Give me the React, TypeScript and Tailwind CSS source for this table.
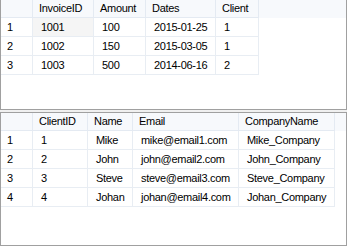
import React from "react";

type Col = { label: string; w: number };

const invoiceCols: Col[] = [
  { label: "", w: 32 },
  { label: "InvoiceID", w: 61 },
  { label: "Amount", w: 52 },
  { label: "Dates", w: 70 },
  { label: "Client", w: 43 },
];

const invoiceRows = [
  ["1", "1001", "100", "2015-01-25", "1"],
  ["2", "1002", "150", "2015-03-05", "1"],
  ["3", "1003", "500", "2014-06-16", "2"],
];

const clientCols: Col[] = [
  { label: "", w: 32 },
  { label: "ClientID", w: 55 },
  { label: "Name", w: 45 },
  { label: "Email", w: 106 },
  { label: "CompanyName", w: 96 },
];

const clientRows = [
  ["1", "1", "Mike", "mike@email1.com", "Mike_Company"],
  ["2", "2", "John", "john@email2.com", "John_Company"],
  ["3", "3", "Steve", "steve@email3.com", "Steve_Company"],
  ["4", "4", "Johan", "johan@email4.com", "Johan_Company"],
];

function ResultGrid({ cols, rows, selected }: { cols: Col[]; rows: string[][]; selected?: boolean }) {
  return (
    <div className="flex flex-col">
      <div className="flex h-[18px] bg-[#f7f9fc]">
        {cols.map((c, i) => (
          <div
            key={i}
            style={{ width: c.w }}
            className="shrink-0 border-r border-b border-[#e4eaf2] pl-[6px] leading-[17px] whitespace-nowrap"
          >
            {c.label}
          </div>
        ))}
      </div>
      {rows.map((r, ri) => (
        <div key={ri} className="flex h-[19px]">
          {r.map((v, ci) => (
            <div
              key={ci}
              style={{ width: cols[ci].w }}
              className={
                "shrink-0 border-r border-b border-[#e8edf3] leading-[18px] whitespace-nowrap " +
                (ci === 0 ? "pl-[6px] " : "pl-[8px] ") +
                (selected && ri === 0 && ci === 1 ? "bg-[#f5f5f5]" : "bg-white")
              }
            >
              {v}
            </div>
          ))}
        </div>
      ))}
    </div>
  );
}

export default function App() {
  return (
    <div
      className="w-[347px] h-[246px] bg-[#f0f0f0] flex flex-col text-[11px] tracking-[-0.3px] text-black overflow-hidden"
      style={{ fontFamily: '"Liberation Sans", Arial, sans-serif' }}
    >
      <div className="h-[110px] shrink-0 bg-white border-l border-r border-b border-[#a0a0a0]">
        <ResultGrid cols={invoiceCols} rows={invoiceRows} selected />
      </div>
      <div className="h-[2px] shrink-0" />
      <div className="h-[134px] shrink-0 bg-white border border-[#a0a0a0]">
        <ResultGrid cols={clientCols} rows={clientRows} />
      </div>
    </div>
  );
}
